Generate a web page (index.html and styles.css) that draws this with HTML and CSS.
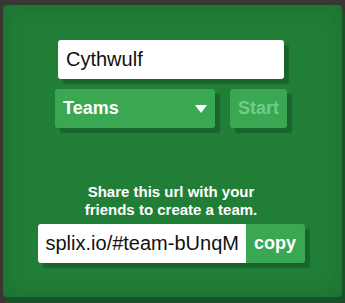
FILE: index.html
```html
<!DOCTYPE html>
<html lang="en">
<head>
    <meta charset="UTF-8">
    <meta name="viewport" content="width=device-width, initial-scale=1.0">
    <title>splix.io team menu</title>
    <link rel="stylesheet" href="styles.css">
</head>
<body>
    <div class="panel">
        <input class="name-input" type="text" value="Cythwulf">

        <div class="controls">
            <div class="mode-select">
                <span>Teams</span>
                <span class="arrow"></span>
            </div>
            <button class="start-button" disabled>Start</button>
        </div>

        <p class="share-text">Share this url with your<br>friends to create a team.</p>

        <div class="url-row">
            <div class="url-box">splix.io/#team-bUnqM</div>
            <button class="copy-button">copy</button>
        </div>
    </div>
</body>
</html>
```

FILE: styles.css
```css
body {
    margin: 0;
    background: #3a3633;
    font-family: "Liberation Sans", Arial, sans-serif;
    height: 303px;
    overflow: hidden;
}
.panel {
    box-sizing: border-box;
    width: 339px;
    height: 292px;
    margin: 5px 0 0 3px;
    padding-top: 35px;
    background: #207e37;
    border-radius: 4px;
    box-shadow: 3px 6px 0 #17522a, inset 0 0 24px rgba(0, 0, 0, 0.12);
    display: flex;
    flex-direction: column;
    align-items: center;
}
.name-input {
    box-sizing: border-box;
    width: 226px;
    height: 39px;
    margin: 0 0 0 -3px;
    padding: 0 8px;
    border: none;
    border-radius: 3px;
    background: #fff;
    color: #111;
    font-family: inherit;
    font-size: 20px;
    box-shadow: 5px 5px 1px rgba(0, 0, 0, 0.2);
    outline: none;
}
.controls {
    display: flex;
    gap: 15px;
    margin: 10px 0 0 -3px;
}
.mode-select {
    box-sizing: border-box;
    width: 160px;
    height: 39px;
    padding: 0 8px;
    display: flex;
    align-items: center;
    justify-content: space-between;
    background: #3aa753;
    border-radius: 3px;
    color: #fff;
    font-size: 18px;
    font-weight: bold;
    box-shadow: 5px 5px 1px rgba(0, 0, 0, 0.2);
}
.arrow {
    width: 0;
    height: 0;
    margin-right: 0;
    border-left: 6px solid transparent;
    border-right: 6px solid transparent;
    border-top: 8px solid #fff;
}
.start-button {
    width: 57px;
    height: 39px;
    padding: 0;
    border: none;
    border-radius: 3px;
    background: #3aa753;
    color: #6fcd87;
    font-family: inherit;
    font-size: 18px;
    font-weight: bold;
    box-shadow: 5px 5px 1px rgba(0, 0, 0, 0.2);
}
.share-text {
    margin: 55px 0 0 -3px;
    color: #fff;
    font-size: 15px;
    font-weight: bold;
    line-height: 18px;
    text-align: center;
}
.url-row {
    display: flex;
    margin: 5px 0 0 -3px;
    box-shadow: 5px 5px 1px rgba(0, 0, 0, 0.2);
    border-radius: 3px;
}
.url-box {
    box-sizing: border-box;
    width: 208px;
    height: 39px;
    padding-left: 8px;
    display: flex;
    align-items: center;
    background: #fff;
    border-radius: 3px 0 0 3px;
    color: #111;
    font-size: 20px;
}
.copy-button {
    width: 59px;
    height: 39px;
    padding: 0;
    border: none;
    border-radius: 0 3px 3px 0;
    background: #3aa753;
    color: #fff;
    font-family: inherit;
    font-size: 18px;
    font-weight: bold;
}
```
